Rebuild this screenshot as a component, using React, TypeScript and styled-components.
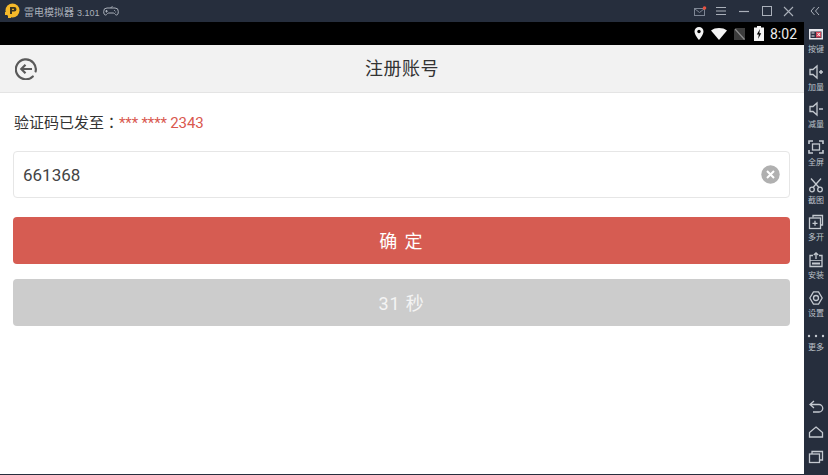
import React from 'react';
import styled, { createGlobalStyle } from 'styled-components';

const Global = createGlobalStyle`
  html, body { margin: 0; padding: 0; background: #fff; overflow: hidden; }
  #root { width: 828px; height: 475px; }
  * { box-sizing: border-box; }
`;

const FONT = `Roboto, "Noto Sans CJK SC", sans-serif`;

const Shell = styled.div`
  width: 828px;
  height: 475px;
  display: grid;
  grid-template-rows: 22px 1fr;
  grid-template-columns: 804px 24px;
  background: #262e3d;
  font-family: ${FONT};
`;

const TitleBar = styled.header`
  grid-column: 1 / 3;
  display: flex;
  align-items: center;
  background: #262e3d;
  color: #a9afb9;
  padding-left: 4px;
`;

const AppName = styled.span`
  font-size: 10px;
  margin-left: 4px;
  color: #aab0ba;
  white-space: nowrap;
`;

const Version = styled.span`
  font-family: "Liberation Sans", sans-serif;
  font-size: 9px;
  margin-left: 3px;
`;

const GamePad = styled.svg`
  margin-left: 3px;
`;

const WindowControls = styled.div`
  margin-left: auto;
  display: flex;
  align-items: center;
  height: 22px;
  padding-right: 8px;
`;

const WinIcon = styled.svg<{ $gap?: number }>`
  display: block;
  margin-left: ${(p) => p.$gap ?? 0}px;
`;

const Screen = styled.main`
  display: flex;
  flex-direction: column;
  background: #fff;
  height: 452px;
`;

const StatusBar = styled.div`
  height: 23px;
  background: #000;
  color: #e8e8e8;
  display: flex;
  align-items: center;
  justify-content: flex-end;
  padding-right: 7px;
`;

const StatusIcon = styled.svg<{ $gap: number }>`
  display: block;
  margin-left: ${(p) => p.$gap}px;
`;

const Clock = styled.span`
  font-size: 14px;
  margin-left: 6px;
  color: #ececec;
`;

const NavBar = styled.div`
  height: 48px;
  position: relative;
  display: flex;
  align-items: center;
  justify-content: center;
  background: #f2f2f2;
  border-bottom: 1px solid #e4e4e4;
  padding-bottom: 3px;
`;

const BackIcon = styled.svg`
  position: absolute;
  left: 15px;
  top: 13px;
`;

const NavTitle = styled.h1`
  margin: 0;
  font-size: 18px;
  font-weight: 400;
  color: #333;
  letter-spacing: 0.5px;
`;

const Content = styled.div`
  flex: 1;
  padding: 19px 14px 0 13px;
  display: flex;
  flex-direction: column;
`;

const Notice = styled.div`
  font-size: 15px;
  line-height: 20px;
  height: 20px;
  color: #333;
  white-space: nowrap;
  margin-left: 1px;
`;

const Colon = styled.span`
  font-family: "Noto Sans CJK TC", sans-serif;
`;

const Masked = styled.span`
  color: #d9584f;
  letter-spacing: -0.15px;
`;

const InputBox = styled.div`
  margin-top: 19px;
  height: 47px;
  border: 1px solid #e6e6e6;
  border-radius: 4px;
  background: #fff;
  display: flex;
  align-items: center;
  justify-content: space-between;
  padding: 0 9px;
  font-size: 17px;
  color: #444;
`;

const ActionButton = styled.div<{ $bg: string; $mt: number; $fg: string; $track: number }>`
  margin-top: ${(p) => p.$mt}px;
  height: 47px;
  border-radius: 4px;
  background: ${(p) => p.$bg};
  color: ${(p) => p.$fg};
  display: flex;
  align-items: center;
  justify-content: center;
  font-size: 18px;
  letter-spacing: ${(p) => p.$track}px;
  padding-bottom: 2px;
`;

const SideBar = styled.aside`
  display: flex;
  flex-direction: column;
  align-items: center;
  background: #262e3d;
  height: 452px;
  padding-top: 4px;
`;

const Tool = styled.div`
  width: 24px;
  height: 37.7px;
  flex: none;
  display: flex;
  flex-direction: column;
  align-items: center;
  color: #c4c9d0;
`;

const ToolLabel = styled.span<{ $tight: boolean }>`
  font-size: 8px;
  line-height: 10px;
  margin-top: ${(p) => (p.$tight ? -1 : 3)}px;
  color: #bcc1c9;
  white-space: nowrap;
`;

const BottomTools = styled.div`
  margin-top: auto;
  display: flex;
  flex-direction: column;
  align-items: center;
  gap: 9px;
  padding-bottom: 9px;
  color: #c4c9d0;
`;

const NavKey = styled.svg`
  display: block;
`;

const s = { fill: 'none', stroke: 'currentColor', strokeWidth: 1.3 };

const ICONS: [string, React.ReactNode][] = [
  ['按键', <>
    <rect x="1" y="3" width="14" height="10.500" fill="#e8e8ee" />
    <rect x="2.500" y="5.500" width="11" height="6.500" fill="#2a2f40" />
    <rect x="8" y="6" width="5" height="5.500" fill="#d6455a" />
    <path d="M3.500 7h3M3.500 10h3" stroke="#e8e8ee" strokeWidth="1" />
    <path d="M9.500 7l2.500 3M12 7l-2.500 3" stroke="#fff" strokeWidth="0.900" />
  </>],
  ['加量', <>
    <path d="M2 5.500h3l4-3.500v12l-4-3.500H2z" {...s} />
    <path d="M11 8h4M13 6v4" {...s} strokeWidth="1.500" />
  </>],
  ['减量', <>
    <path d="M2 5.500h3l4-3.500v12l-4-3.500H2z" {...s} />
    <path d="M11 8h4" {...s} strokeWidth="1.500" />
  </>],
  ['全屏', <>
    <path d="M1 5V2h4M11 2h4v3M15 11v3h-4M5 14H1v-3" {...s} strokeWidth="1.600" />
    <rect x="4.500" y="5" width="7" height="6" {...s} />
  </>],
  ['截图', <>
    <path d="M3 1.500l8 9M13 1.500l-8 9" {...s} />
    <circle cx="4" cy="12.500" r="2.300" {...s} />
    <circle cx="12" cy="12.500" r="2.300" {...s} />
  </>],
  ['多开', <>
    <path d="M5 3.500V1.500h9.500v9.500h-2" {...s} />
    <rect x="1.500" y="4" width="11" height="10.500" {...s} />
    <path d="M7 6.800v5M4.500 9.300h5" {...s} />
  </>],
  ['安装', <>
    <path d="M5 3.500H2v11h12v-11h-3" {...s} />
    <path d="M8 7V1M5.800 3L8 .8 10.200 3" {...s} />
    <path d="M2 8.500h12" {...s} strokeWidth="0.800" />
    <path d="M4 10.500h8v2H4z" fill="currentColor" />
  </>],
  ['设置', <>
    <path d="M5.500 1.800h5l3.700 6.200-3.700 6.200h-5L1.800 8z" {...s} strokeLinejoin="round" />
    <circle cx="8" cy="8" r="2.500" {...s} />
  </>],
  ['更多', <>
    <circle cx="1" cy="8" r="1.200" fill="currentColor" />
    <circle cx="8" cy="8" r="1.200" fill="currentColor" />
    <circle cx="15" cy="8" r="1.200" fill="currentColor" />
  </>],
];

export default function App() {
  return (
    <>
      <Global />
      <Shell>
        <TitleBar>
          <svg width="16" height="16" viewBox="0 0 16 16">
            <circle cx="8.500" cy="7.500" r="7" fill="#f5b92a" />
            <rect x="1" y="9" width="4" height="3" fill="#f5b92a" />
            <rect x="4" y="11" width="3" height="4" fill="#f5b92a" />
            <path d="M6 4h4.200a2.300 2.300 0 0 1 0 4.600H8V11H6z" fill="#3a3420" />
            <rect x="8" y="5.800" width="2" height="1.100" fill="#f5b92a" />
          </svg>
          <AppName>雷电模拟器<Version>3.101</Version></AppName>
          <GamePad width="16" height="12" viewBox="0 0 16 12" fill="none" stroke="#aab0ba" strokeWidth="1">
            <path d="M4 3h8a3.300 3.300 0 0 1 3.300 3.500c0 2.200-.6 3.500-1.800 3.500-1.400 0-2-2-3-2H5.500c-1 0-1.600 2-3 2C1.300 10 .7 8.700.7 6.500A3.300 3.300 0 0 1 4 3z" />
            <path d="M8 3c0-1 .6-1.200 1.500-1.500M3.500 5v2.500M2.300 6.200h2.500M11 5.500h.8M12.300 7h.8" />
          </GamePad>
          <WindowControls>
            <WinIcon width="13" height="11" viewBox="0 0 13 11">
              <rect x="0.500" y="2.500" width="10" height="7" fill="none" stroke="#7e8694" />
              <path d="M1 3l4.500 3.500L10 3" fill="none" stroke="#7e8694" />
              <circle cx="10.500" cy="2" r="1.800" fill="#e8503f" />
            </WinIcon>
            <WinIcon $gap={9} width="10" height="10" viewBox="0 0 10 10">
              <path d="M0 1.500h10M0 5h10M0 8.500h10" stroke="#aab0ba" strokeWidth="1.200" />
            </WinIcon>
            <WinIcon $gap={13} width="10" height="10" viewBox="0 0 10 10">
              <path d="M0 5.500h10" stroke="#aab0ba" strokeWidth="1.200" />
            </WinIcon>
            <WinIcon $gap={13} width="10" height="10" viewBox="0 0 10 10">
              <rect x="0.500" y="0.500" width="9" height="9" fill="none" stroke="#aab0ba" />
            </WinIcon>
            <WinIcon $gap={11} width="11" height="11" viewBox="0 0 11 11">
              <path d="M1 1l9 9M10 1l-9 9" stroke="#aab0ba" strokeWidth="1.100" />
            </WinIcon>
            <WinIcon $gap={16} width="10" height="10" viewBox="0 0 10 10">
              <path d="M4.500 1L1 5l3.500 4M9 1L5.500 5 9 9" fill="none" stroke="#aab0ba" />
            </WinIcon>
          </WindowControls>
        </TitleBar>
        <Screen>
          <StatusBar>
            <StatusIcon $gap={0} width="10" height="13" viewBox="0 0 10 13">
              <path d="M5 0a4.500 4.500 0 0 1 4.500 4.500C9.500 8 5 13 5 13S.5 8 .5 4.500A4.500 4.500 0 0 1 5 0z" fill="#f4f4f4" />
              <circle cx="5" cy="4.500" r="1.700" fill="#000" />
            </StatusIcon>
            <StatusIcon $gap={7} width="16" height="12" viewBox="0 0 16 12">
              <path d="M8 12L0 2.500C2 .8 5 0 8 0s6 .8 8 2.500z" fill="#f4f4f4" />
            </StatusIcon>
            <StatusIcon $gap={7} width="11" height="12" viewBox="0 0 11 12">
              <path d="M2 0h9v12H0V2z" fill="#3c3c3c" />
              <path d="M1 1l9.500 10.500" stroke="#8c8c8c" strokeWidth="1.200" />
            </StatusIcon>
            <StatusIcon $gap={9} width="10" height="15" viewBox="0 0 10 15">
              <path d="M3 0h4v1.500h3V15H0V1.500h3z" fill="#f4f4f4" />
              <path d="M6 3L2.800 8.500h2l-.7 4.500 3.100-5.800H5.300z" fill="#000" />
            </StatusIcon>
            <Clock>8:02</Clock>
          </StatusBar>
          <NavBar>
            <BackIcon width="22" height="22" viewBox="0 0 22 22" fill="none" stroke="#5a5a5a" strokeWidth="2.200">
              <path d="M17.800 18.500A10 10 0 1 1 20.600 13.500" strokeLinecap="round" />
              <path d="M17 11H6.500M10.500 6.800L6.300 11l4.200 4.200" />
            </BackIcon>
            <NavTitle>注册账号</NavTitle>
          </NavBar>
          <Content>
            <Notice>验证码已发至<Colon>：</Colon><Masked>*** **** 2343</Masked></Notice>
            <InputBox>
              661368
              <svg width="19" height="19" viewBox="0 0 19 19">
                <circle cx="9.500" cy="9.500" r="9.200" fill="#b0b0b0" />
                <path d="M6 6l7 7M13 6l-7 7" stroke="#fff" strokeWidth="2" />
              </svg>
            </InputBox>
            <ActionButton $bg="#d65c52" $fg="#fff" $mt={19} $track={1.3}>确 定</ActionButton>
            <ActionButton $bg="#cccccc" $fg="#f4f4f4" $mt={15} $track={0.8}>31 秒</ActionButton>
          </Content>
        </Screen>
        <SideBar>
          {ICONS.map(([label, icon]) => (
            <Tool key={label}>
              <svg width="16" height="16" viewBox="0 0 16 16" style={{ overflow: 'visible' }}>{icon}</svg>
              <ToolLabel $tight={label === '更多'}>{label}</ToolLabel>
            </Tool>
          ))}
          <BottomTools>
            <NavKey width="16" height="16" viewBox="0 0 16 16">
              <path d="M6 2L2 5.500 6 9M2 5.500h9a3.500 3.500 0 0 1 0 7.500H5" {...s} />
            </NavKey>
            <NavKey width="16" height="16" viewBox="0 0 16 16">
              <path d="M8 3l6.500 5.500V13h-13V8.500z" {...s} />
            </NavKey>
            <NavKey width="16" height="16" viewBox="0 0 16 16">
              <rect x="1.500" y="5" width="10" height="8.500" {...s} />
              <path d="M4 5V2.500h10.500V11H11.500" {...s} />
            </NavKey>
          </BottomTools>
        </SideBar>
      </Shell>
    </>
  );
}
